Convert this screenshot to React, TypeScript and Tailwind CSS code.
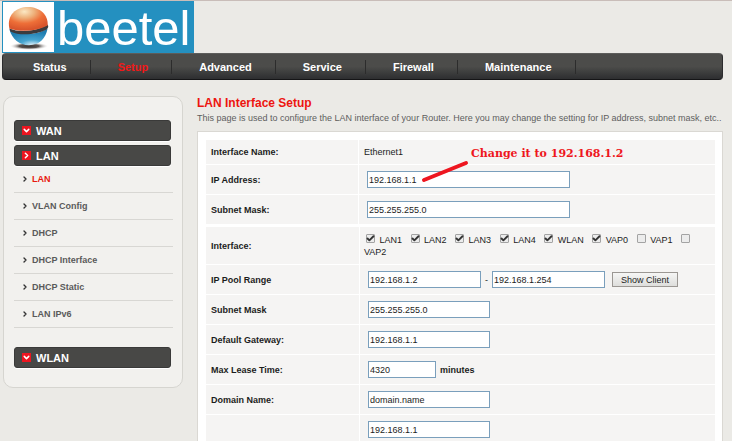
import React from 'react';
import { Check, ChevronDown, ChevronRight } from 'lucide-react';

const navItems = ['Status', 'Setup', 'Advanced', 'Service', 'Firewall', 'Maintenance'];

const lanLinks = ['LAN', 'VLAN Config', 'DHCP', 'DHCP Interface', 'DHCP Static', 'LAN IPv6'];

const ports = [
  { name: 'LAN1', checked: true },
  { name: 'LAN2', checked: true },
  { name: 'LAN3', checked: true },
  { name: 'LAN4', checked: true },
  { name: 'WLAN', checked: true },
  { name: 'VAP0', checked: true },
  { name: 'VAP1', checked: false },
  { name: 'VAP2', checked: false },
];

const Logo: React.FC = () => (
  <div className="flex w-[192px] h-[52px] bg-[#2490c0] border border-[#2490c0]">
    <svg viewBox="0 0 51 51" className="w-[51px] h-[50px] bg-white shrink-0" aria-hidden="true">
      <defs>
        <radialGradient id="orangeHalf" cx="0.4" cy="0.2" r="0.75">
          <stop offset="0" stopColor="#fbe8c4" />
          <stop offset="0.35" stopColor="#eeb07a" />
          <stop offset="0.65" stopColor="#ee6f38" />
          <stop offset="1" stopColor="#d9552c" />
        </radialGradient>
        <radialGradient id="blueHalf" cx="0.6" cy="1" r="0.8">
          <stop offset="0" stopColor="#e4f3fa" />
          <stop offset="0.4" stopColor="#46a5d0" />
          <stop offset="1" stopColor="#1f7db0" />
        </radialGradient>
        <radialGradient id="ballShadow">
          <stop offset="0" stopColor="#3a3532" />
          <stop offset="0.5" stopColor="#5a5350" />
          <stop offset="1" stopColor="#ffffff" stopOpacity="0" />
        </radialGradient>
      </defs>
      <ellipse cx="26" cy="45" rx="20" ry="4" fill="url(#ballShadow)" />
      <path d="M6 28 C9 38 16 44 26 44 C37 44 43 37 45 27 C35 34 18 34 6 28Z" fill="url(#blueHalf)" />
      <path d="M6 27 C18 32 35 29 45 23 C46 25 46 26 44 28 C35 33 17 35 7 30Z" fill="#3c3b3d" />
      <path d="M6 27 C3 13 13 5 25 5 C37 5 46 13 45 24 C34 30 17 31 6 27Z" fill="url(#orangeHalf)" />
    </svg>
    <span className="pt-[3px] pl-[3px] text-[49px] leading-[47px] text-white">beetel</span>
  </div>
);

interface MenuHeadingProps {
  label: string;
  open?: boolean;
}

const MenuHeading: React.FC<MenuHeadingProps> = ({ label, open }) => {
  const Icon = open ? ChevronRight : ChevronDown;
  return (
    <button
      type="button"
      aria-expanded={!!open}
      className="flex items-center gap-[5px] w-full h-[21px] pl-[7px] mb-1 rounded-[3px] border border-[#3a3a39] bg-[#484846] text-white text-[11px] font-bold shadow-[0_1px_0_#ffffff]"
    >
      <span className="flex items-center justify-center w-[9px] h-[9px] bg-[#ec1520]">
        <Icon className="w-[9px] h-[9px]" strokeWidth={4} />
      </span>
      {label}
    </button>
  );
};

interface TextFieldProps {
  id: string;
  value: string;
  width: string;
  label?: string;
}

const TextField: React.FC<TextFieldProps> = ({ id, value, width, label }) => (
  <input
    id={id}
    type="text"
    aria-label={label}
    defaultValue={value}
    className={`${width} h-[17px] px-px bg-white border border-[#7a9fbc] text-[9px] text-[#1c1c1c]`}
  />
);

interface RowProps {
  label: string;
  htmlFor?: string;
  height?: string;
  columns?: string;
  children: React.ReactNode;
}

const Row: React.FC<RowProps> = ({
  label,
  htmlFor,
  height = 'min-h-[29px]',
  columns = 'grid-cols-[153px_1fr]',
  children,
}) => (
  <div className={`grid ${columns} ${height} gap-px`}>
    <div className="flex items-center pl-[5px] bg-[#f5f4f3] font-bold">
      {htmlFor ? <label htmlFor={htmlFor}>{label}</label> : label}
    </div>
    <div className="relative flex items-center px-2 bg-[#f5f4f3]">{children}</div>
  </div>
);

const topColumns = 'grid-cols-[152px_1fr]';

const App: React.FC = () => (
  <div
    className="min-h-screen bg-[#ebeae6] border-t border-[#c9bdb9] text-[9px] leading-[12px] text-[#1c1c1c]"
    style={{ fontFamily: '"Liberation Sans", Arial, sans-serif' }}
  >
    <header className="pl-[2px] pr-[9px]">
      <Logo />
      <nav className="flex items-center h-[27px] pl-[3px] rounded-[4px] bg-linear-to-b from-[#4c4c4a] from-50% to-[#2d2e30] border border-t-[#5d5d5b] border-x-[#2c2c2e] border-b-[#151517]">
        {navItems.map((item) => (
          <a
            key={item}
            href="#"
            className={`pl-[27px] pr-[23px] border-r border-[#2c2c2c] text-[11px] leading-[14px] font-bold ${
              item === 'Setup' ? 'text-[#f01818]' : 'text-white'
            }`}
          >
            {item}
          </a>
        ))}
      </nav>
    </header>

    <div className="flex items-start gap-[14px] pt-4 pl-[3px] pr-[9px]">
      {/* Side menu */}
      <aside className="w-[180px] shrink-0 pt-[23px] pb-[15px] pl-[10px] pr-[9px] rounded-[10px] border border-[#d6d5d0] bg-[#f2f1ee]">
        <div className="pr-[2px]">
          <MenuHeading label="WAN" />
          <MenuHeading label="LAN" open />
        </div>
        <ul className="-mt-1 mb-[19px]">
          {lanLinks.map((link) => (
            <li key={link} className="h-[27px] border-b border-[#d8d7d3]">
              <a
                href="#"
                className={`flex items-center gap-[3px] h-full pl-[7px] font-bold ${
                  link === 'LAN' ? 'text-[#e8190f]' : 'text-[#5a5a5a]'
                }`}
              >
                <ChevronRight className="w-2 h-2 text-[#333333]" strokeWidth={4} />
                {link}
              </a>
            </li>
          ))}
        </ul>
        <div className="pr-[2px]">
          <MenuHeading label="WLAN" />
        </div>
      </aside>

      <main className="flex-1 min-w-0">
        <h1 className="text-[12px] leading-[14px] font-bold text-[#ed1510]">LAN Interface Setup</h1>
        <p className="pt-[2px] pb-[7px] text-[#5e5e5e]">
          This page is used to configure the LAN interface of your Router. Here you may change the
          setting for IP address, subnet mask, etc..
        </p>

        <form className="p-2 pr-[7px] border border-b-0 border-[#dad8d3] bg-white">
          <div className="flex flex-col gap-px">
            <Row label="Interface Name:" height="min-h-[24px]" columns={topColumns}>
              <span className="-ml-[3px]">Ethernet1</span>
              {/* Note pointing at the IP address field */}
              <div
                className="absolute z-10 left-[112px] top-2 text-[11px] font-black whitespace-nowrap text-[#ee1620]"
                style={{ fontFamily: '"DejaVu Serif", serif' }}
              >
                Change it to 192.168.1.2
              </div>
              <svg
                className="absolute z-10 left-[61px] top-[19px] w-[50px] h-[24px]"
                viewBox="0 0 50 24"
                aria-hidden="true"
              >
                <path d="M4 21 L46 4" stroke="#ee1620" strokeWidth="4" strokeLinecap="round" />
              </svg>
            </Row>
            <Row label="IP Address:" htmlFor="ip" columns={topColumns}>
              <TextField id="ip" value="192.168.1.1" width="w-[203px]" />
            </Row>
            <Row label="Subnet Mask:" htmlFor="mask" columns={topColumns}>
              <TextField id="mask" value="255.255.255.0" width="w-[203px]" />
            </Row>
          </div>

          <div className="flex flex-col gap-px mt-[3px]">
            <Row label="Interface:" height="min-h-[37px]">
              <div className="-ml-1">
                {ports.map((port) => (
                  <React.Fragment key={port.name}>
                    <label>
                      <span className="relative inline-block w-[9px] h-[9px] ml-[2px] mr-[2px]">
                        <input
                          type="checkbox"
                          defaultChecked={port.checked}
                          className="peer block appearance-none w-[9px] h-[9px] rounded-[1px] border border-[#a3a3a3] bg-[#ececec]"
                        />
                        <Check
                          className="absolute inset-0 w-[9px] h-[9px] text-[#333333] pointer-events-none hidden peer-checked:block"
                          strokeWidth={5}
                        />
                      </span>{' '}
                      <span className="mr-1">{port.name}</span>
                    </label>{' '}
                  </React.Fragment>
                ))}
              </div>
            </Row>
            <Row label="IP Pool Range" htmlFor="poolStart">
              <TextField id="poolStart" value="192.168.1.2" width="w-[113px]" />
              <span className="w-[11px] text-center">-</span>
              <TextField id="poolEnd" label="IP pool end" value="192.168.1.254" width="w-[113px]" />
              <button
                type="button"
                className="ml-[7px] w-[66px] h-[15px] border border-[#9b9793] bg-linear-to-b from-[#f6f6f5] to-[#dededc] leading-[12px]"
              >
                Show Client
              </button>
            </Row>
            <Row label="Subnet Mask" htmlFor="poolMask">
              <TextField id="poolMask" value="255.255.255.0" width="w-[122px]" />
            </Row>
            <Row label="Default Gateway:" htmlFor="gateway">
              <TextField id="gateway" value="192.168.1.1" width="w-[122px]" />
            </Row>
            <Row label="Max Lease Time:" htmlFor="lease">
              <TextField id="lease" value="4320" width="w-[68px]" />
              <span className="pl-1 font-bold">minutes</span>
            </Row>
            <Row label="Domain Name:" htmlFor="domain">
              <TextField id="domain" value="domain.name" width="w-[122px]" />
            </Row>
            <Row label="">
              <TextField id="dns" label="DNS server" value="192.168.1.1" width="w-[122px]" />
            </Row>
          </div>
        </form>
      </main>
    </div>
  </div>
);

export default App;
